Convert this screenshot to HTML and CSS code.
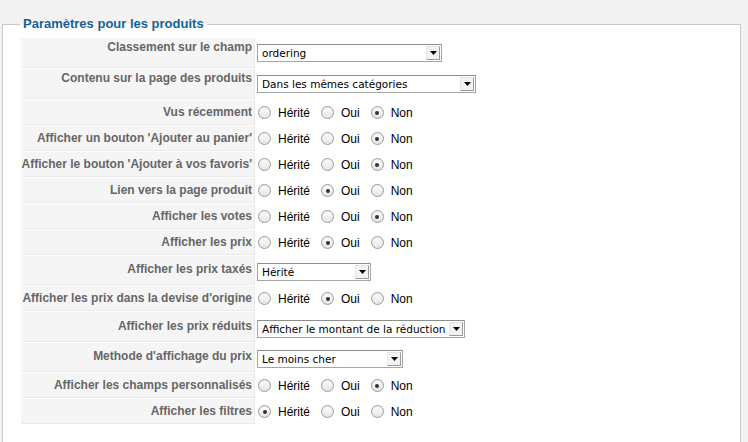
FILE: index.html
```html
<!DOCTYPE html>
<html lang="fr">
<head>
  <meta charset="UTF-8" />
  <title>Paramètres pour les produits</title>
  <link rel="stylesheet" href="styles.css">
</head>
<body>

  <fieldset class="params">
    <legend>Paramètres pour les produits</legend>

    <div class="admintable">

      <div class="row row-select">
        <div class="key">Classement sur le champ</div>
        <div class="value">
          <div class="select select-ordering"><span class="select-text">ordering</span><span class="arrow"><svg width="7" height="4" viewBox="0 0 7 4"><path d="M0 0H7L3.5 4Z" fill="#000"/></svg></span></div>
        </div>
      </div>

      <div class="row row-select">
        <div class="key">Contenu sur la page des produits</div>
        <div class="value">
          <div class="select select-contenu"><span class="select-text">Dans les mêmes catégories</span><span class="arrow"><svg width="7" height="4" viewBox="0 0 7 4"><path d="M0 0H7L3.5 4Z" fill="#000"/></svg></span></div>
        </div>
      </div>

      <div class="row row-radio">
        <div class="key">Vus récemment</div>
        <div class="value">
          <span class="radio"></span><span class="opt">Hérité</span>
          <span class="radio"></span><span class="opt">Oui</span>
          <span class="radio checked"></span><span class="opt">Non</span>
        </div>
      </div>

      <div class="row row-radio">
        <div class="key">Afficher un bouton 'Ajouter au panier'</div>
        <div class="value">
          <span class="radio"></span><span class="opt">Hérité</span>
          <span class="radio"></span><span class="opt">Oui</span>
          <span class="radio checked"></span><span class="opt">Non</span>
        </div>
      </div>

      <div class="row row-radio">
        <div class="key">Afficher le bouton 'Ajouter à vos favoris'</div>
        <div class="value">
          <span class="radio"></span><span class="opt">Hérité</span>
          <span class="radio"></span><span class="opt">Oui</span>
          <span class="radio checked"></span><span class="opt">Non</span>
        </div>
      </div>

      <div class="row row-radio">
        <div class="key">Lien vers la page produit</div>
        <div class="value">
          <span class="radio"></span><span class="opt">Hérité</span>
          <span class="radio checked"></span><span class="opt">Oui</span>
          <span class="radio"></span><span class="opt">Non</span>
        </div>
      </div>

      <div class="row row-radio">
        <div class="key">Afficher les votes</div>
        <div class="value">
          <span class="radio"></span><span class="opt">Hérité</span>
          <span class="radio"></span><span class="opt">Oui</span>
          <span class="radio checked"></span><span class="opt">Non</span>
        </div>
      </div>

      <div class="row row-radio">
        <div class="key">Afficher les prix</div>
        <div class="value">
          <span class="radio"></span><span class="opt">Hérité</span>
          <span class="radio checked"></span><span class="opt">Oui</span>
          <span class="radio"></span><span class="opt">Non</span>
        </div>
      </div>

      <div class="row row-select row-low">
        <div class="key">Afficher les prix taxés</div>
        <div class="value">
          <div class="select select-taxes"><span class="select-text">Hérité</span><span class="arrow"><svg width="7" height="4" viewBox="0 0 7 4"><path d="M0 0H7L3.5 4Z" fill="#000"/></svg></span></div>
        </div>
      </div>

      <div class="row row-radio">
        <div class="key">Afficher les prix dans la devise d'origine</div>
        <div class="value">
          <span class="radio"></span><span class="opt">Hérité</span>
          <span class="radio checked"></span><span class="opt">Oui</span>
          <span class="radio"></span><span class="opt">Non</span>
        </div>
      </div>

      <div class="row row-select row-low row-tall">
        <div class="key">Afficher les prix réduits</div>
        <div class="value">
          <div class="select select-reduits"><span class="select-text">Afficher le montant de la réduction</span><span class="arrow"><svg width="7" height="4" viewBox="0 0 7 4"><path d="M0 0H7L3.5 4Z" fill="#000"/></svg></span></div>
        </div>
      </div>

      <div class="row row-select row-low">
        <div class="key">Methode d'affichage du prix</div>
        <div class="value">
          <div class="select select-methode"><span class="select-text">Le moins cher</span><span class="arrow"><svg width="7" height="4" viewBox="0 0 7 4"><path d="M0 0H7L3.5 4Z" fill="#000"/></svg></span></div>
        </div>
      </div>

      <div class="row row-radio">
        <div class="key">Afficher les champs personnalisés</div>
        <div class="value">
          <span class="radio"></span><span class="opt">Hérité</span>
          <span class="radio"></span><span class="opt">Oui</span>
          <span class="radio checked"></span><span class="opt">Non</span>
        </div>
      </div>

      <div class="row row-radio">
        <div class="key">Afficher les filtres</div>
        <div class="value">
          <span class="radio checked"></span><span class="opt">Hérité</span>
          <span class="radio"></span><span class="opt">Oui</span>
          <span class="radio"></span><span class="opt">Non</span>
        </div>
      </div>

    </div>
  </fieldset>

</body>
</html>
```

FILE: styles.css
```css
body {
  margin: 0;
  background: #f3f3f3;
  font-family: "Liberation Sans", Arial, sans-serif;
  font-size: 12px;
}

.params {
  box-sizing: border-box;
  width: 739px;
  height: 440px;
  margin: 16px 0 0 2px;
  padding: 5px 17px 10px 17px;
  border: 1px solid #c8c8c8;
  background: #fff;
}

.params legend {
  padding: 0 3px;
  font-size: 13px;
  line-height: 16px;
  font-weight: bold;
  color: #146295;
}

.admintable {
  display: flex;
  flex-direction: column;
  gap: 1px;
  margin: 1px;
}

.row {
  display: flex;
  gap: 1px;
}

.key {
  box-sizing: border-box;
  width: 234px;
  padding: 0 2px 0 0;
  background: #f5f5f5;
  border-right: 1px solid #e9e9e9;
  border-bottom: 1px solid #e9e9e9;
  text-align: right;
  white-space: nowrap;
  font-weight: bold;
  line-height: 14px;
  color: #666;
}

.value {
  display: flex;
  align-items: flex-start;
  padding-left: 1px;
  color: #000;
}

/* rows with a select */
.row-select .key {
  height: 30px;
  padding-top: 2px;
}

.row-select .value {
  padding-top: 6px;
}

.row-low .key {
  height: 29px;
  padding-top: 6px;
}

.row-low .value {
  padding-top: 7px;
}

.row-tall .key {
  height: 30px;
  padding-top: 7px;
}

.row-tall .value {
  padding-top: 8px;
}

/* rows with radios */
.row-radio .key {
  height: 25px;
  padding-top: 5px;
}

.row-radio .value {
  padding-top: 5px;
  line-height: 14px;
}

.select {
  box-sizing: border-box;
  display: flex;
  height: 18px;
  border: 1px solid #a5a5a5;
  border-top-color: #8e8e8e;
  background: #fff;
}

.select-text {
  flex: 1;
  padding-left: 4px;
  font-family: "DejaVu Sans", sans-serif;
  font-size: 10.5px;
  line-height: 16px;
  white-space: nowrap;
  overflow: hidden;
}

.arrow {
  box-sizing: border-box;
  display: flex;
  align-items: center;
  justify-content: center;
  width: 14px;
  margin: 1px 1px 1px 0;
  border: 1px solid;
  border-color: #e6e6e6 #9a9a9a #9a9a9a #e6e6e6;
  background: #f2f2f2;
}

.select-ordering { width: 185px; }
.select-contenu { width: 219px; }
.select-taxes { width: 114px; }
.select-reduits { width: 208px; }
.select-methode { width: 146px; }

.radio {
  box-sizing: border-box;
  position: relative;
  flex: none;
  width: 13px;
  height: 13px;
  margin: 1px 7px 0 1px;
  border: 1px solid #9b9b9b;
  border-radius: 50%;
  background: linear-gradient(#ffffff, #e4e4e4);
  box-shadow: inset 0 1px 1px rgba(0, 0, 0, 0.08);
}

.radio.checked::after {
  content: "";
  position: absolute;
  left: 3.5px;
  top: 3.5px;
  width: 4px;
  height: 4px;
  border-radius: 50%;
  background: #333;
}

.opt {
  margin-right: 10px;
  padding-top: 1px;
  line-height: 14px;
}
```
